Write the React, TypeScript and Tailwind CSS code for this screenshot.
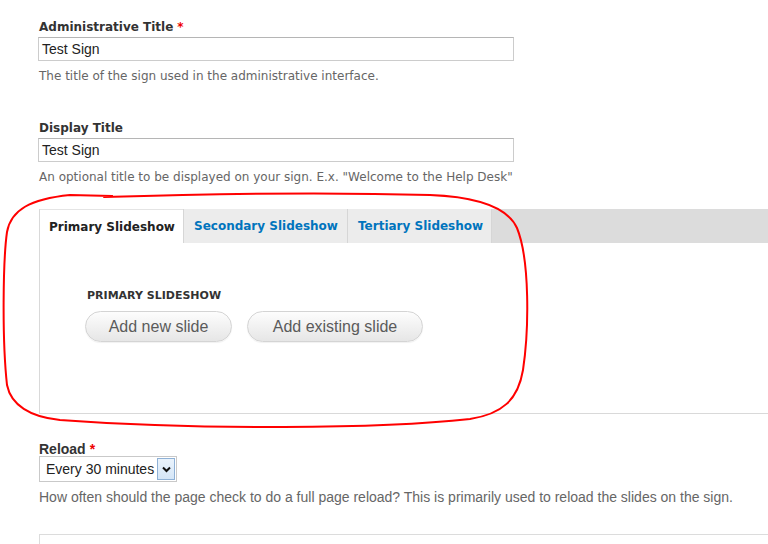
import React from "react";

const verdana = "font-['DejaVu_Sans',Verdana,sans-serif]";
const arial = "font-['Liberation_Sans',Arial,sans-serif]";

function Label({ text, required }: { text: string; required?: boolean }) {
  return (
    <div className={`${verdana} text-[12px] leading-[16px] font-bold text-[#333]`}>
      {text}
      {required && <span className="text-[#e00] ml-[4px]">*</span>}
    </div>
  );
}

function TextInput({ value }: { value: string }) {
  return (
    <div className="mt-[2px] w-[476px] h-[24px] border border-[#ccc] border-t-[#b5b5b5] bg-white flex items-center px-[3px]">
      <span className={`${arial} text-[14px] text-[#222]`}>{value}</span>
    </div>
  );
}

function Desc({ text }: { text: string }) {
  return <div className={`${verdana} mt-[7px] text-[12px] leading-[16px] text-[#666]`}>{text}</div>;
}

function Pill({ text, w }: { text: string; w: string }) {
  return (
    <div
      className={`${w} h-[31px] rounded-full border border-[#d4d4d4] bg-gradient-to-b from-[#fdfdfd] to-[#e6e6e6] flex items-center justify-center ${arial} text-[16px] text-[#5b5b5b] shadow-[0_1px_1px_rgba(0,0,0,0.06)]`}
    >
      {text}
    </div>
  );
}

export default function App() {
  return (
    <div className="relative w-[768px] h-[544px] overflow-hidden bg-white">
      <div className="pl-[38px] pt-[19px]">
        <div className="pl-[1px]">
          <Label text="Administrative Title" required />
        </div>
        <TextInput value="Test Sign" />
        <div className="pl-[1px]">
          <Desc text="The title of the sign used in the administrative interface." />
        </div>

        <div className="pl-[1px] mt-[36px]">
          <Label text="Display Title" />
        </div>
        <TextInput value="Test Sign" />
        <div className="pl-[1px]">
          <Desc text={'An optional title to be displayed on your sign. E.x. "Welcome to the Help Desk"'} />
        </div>

        {/* Tabs */}
        <div className="mt-[24px] ml-[1px] w-[760px] border-l border-b border-[#d9d9d9]">
          <div className="flex h-[34px] bg-[#dcdcdc]">
            <div className={`w-[143px] bg-white border-t border-[#e4e4e4] flex items-center pl-[9px] ${verdana} text-[12px] font-bold text-[#222]`}>
              Primary Slideshow
            </div>
            <div className={`w-[164px] bg-[#ececec] border-l border-[#d6d6d6] flex items-center pl-[10px] ${verdana} text-[12px] font-bold text-[#0074bd]`}>
              Secondary Slideshow
            </div>
            <div className={`w-[145px] bg-[#ececec] border-l border-[#d6d6d6] border-r flex items-center pl-[10px] ${verdana} text-[12px] font-bold text-[#0074bd]`}>
              Tertiary Slideshow
            </div>
          </div>
          <div className="h-[170px] bg-white pl-[46px] pt-[46px]">
            <div className={`${verdana} text-[11px] leading-[14px] font-bold text-[#333] pl-[1px]`}>PRIMARY SLIDESHOW</div>
            <div className="flex gap-[15px] mt-[8px] -ml-[1px]">
              <Pill text="Add new slide" w="w-[147px]" />
              <Pill text="Add existing slide" w="w-[176px]" />
            </div>
          </div>
        </div>

        {/* Reload */}
        <div className="mt-[27px] pl-[1px]">
          <div className={`${arial} text-[14px] leading-[16px] font-bold text-[#333]`}>
            Reload<span className="text-[#e00] ml-[4px]">*</span>
          </div>
          <div className="-mt-[1px] w-[138px] h-[26px] border border-[#c9c9c9] bg-white flex items-stretch">
            <div className={`flex-1 flex items-center pl-[6px] ${arial} text-[14px] text-[#222]`}>Every 30 minutes</div>
            <div className="w-[18px] my-[1px] mr-[1px] border border-[#8fb1d6] bg-gradient-to-b from-[#eaf3fc] to-[#d5e6f7] flex items-center justify-center">
              <svg width="9" height="7" viewBox="0 0 9 7">
                <path d="M1 1.5 L4.5 5 L8 1.5" fill="none" stroke="#111" strokeWidth="2" />
              </svg>
            </div>
          </div>
          <div className={`${arial} mt-[7px] text-[14px] leading-[16px] text-[#666]`}>
            How often should the page check to do a full page reload? This is primarily used to reload the slides on the sign.
          </div>
        </div>

        <div className="mt-[29px] ml-[1px] w-[760px] h-[40px] border-l border-t border-[#dcdcdc]" />
      </div>

      {/* red hand-drawn annotation */}
      <svg className="absolute left-0 top-0 pointer-events-none" width="768" height="544" viewBox="0 0 768 544">
        <path
          d="M 104 197 C 200 194, 330 192, 430 195 C 480 197, 508 208, 517 228 C 530 260, 529 330, 523 370 C 518 400, 502 414, 470 419 C 380 429, 200 430, 60 420 C 30 417, 11 405, 7 385 C 2 340, 3 260, 7 232 C 11 210, 30 199, 70 195 L 112 196"
          fill="none"
          stroke="#ff0000"
          strokeWidth="2"
          strokeLinecap="round"
        />
      </svg>
    </div>
  );
}
